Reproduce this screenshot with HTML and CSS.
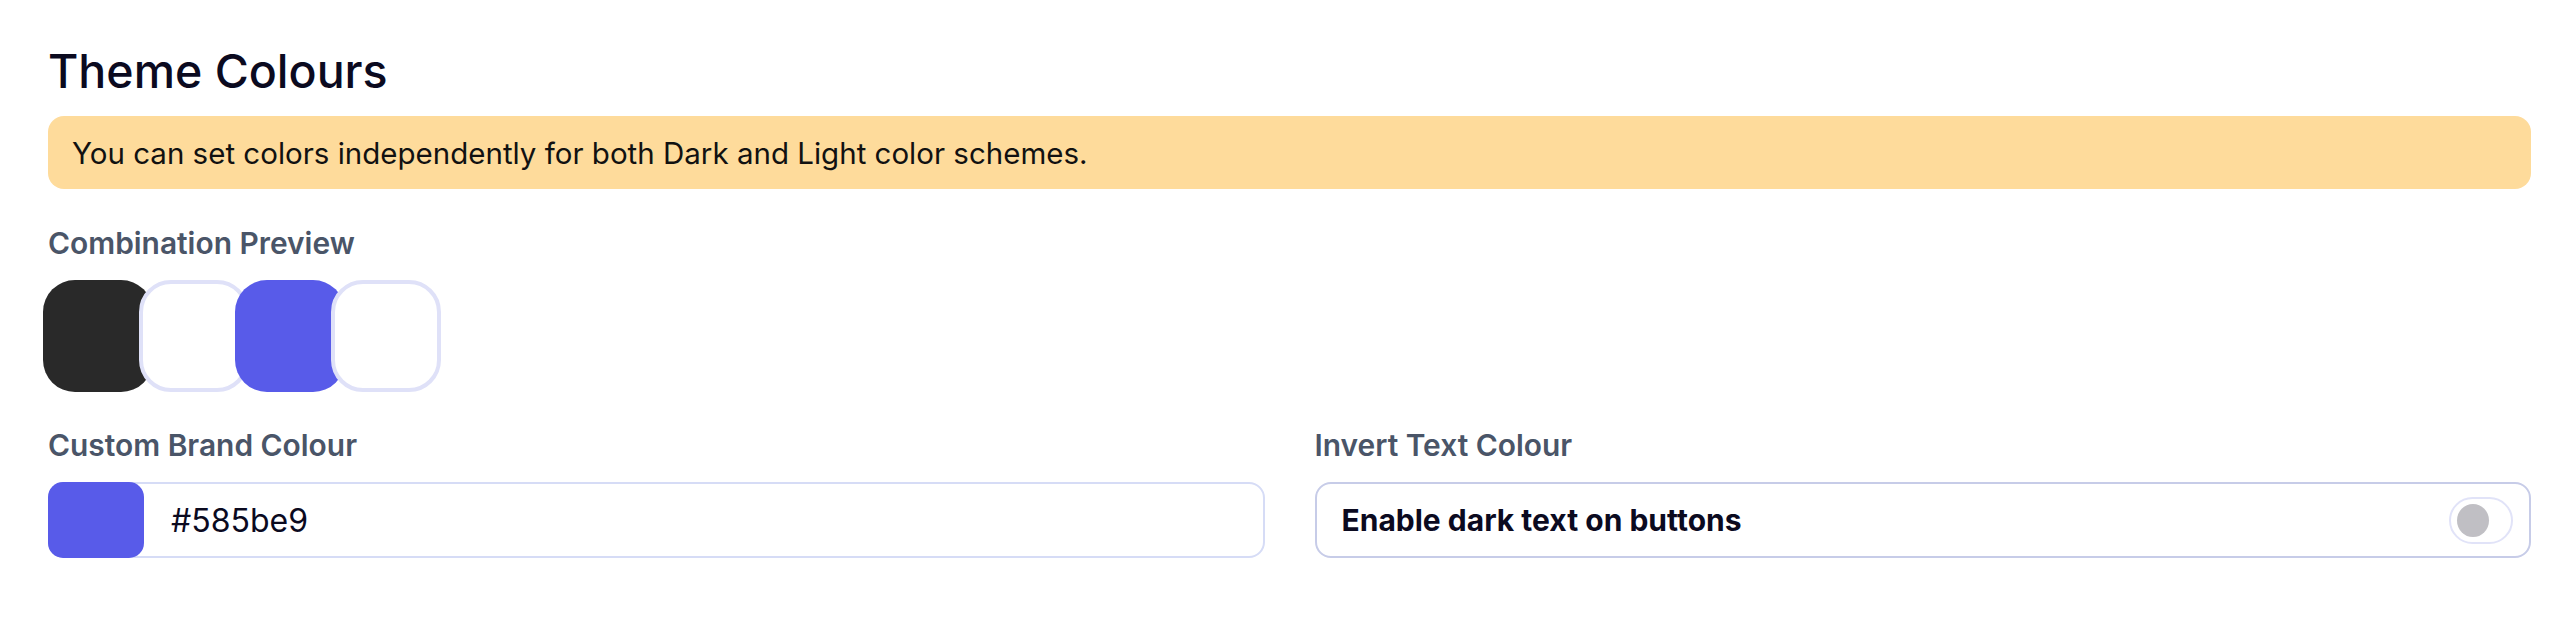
FILE: index.html
```html
<!DOCTYPE html>
<html lang="en">
<head>
<meta charset="utf-8">
<title>Theme Colours</title>
<link rel="stylesheet" href="styles.css">
</head>
<body>
<div class="page">
  <h1 class="title">Theme Colours</h1>
  <div class="notice">You can set colors independently for both Dark and Light color schemes.</div>
  <div class="field preview">
    <div class="label">Combination Preview</div>
    <div class="swatches">
      <span class="swatch swatch-dark"></span>
      <span class="swatch swatch-light"></span>
      <span class="swatch swatch-brand"></span>
      <span class="swatch swatch-light"></span>
    </div>
  </div>
  <div class="grid">
    <div class="field">
      <div class="label">Custom Brand Colour</div>
      <div class="color-input">
        <span class="chip"></span>
        <span class="hex">#585be9</span>
      </div>
    </div>
    <div class="field">
      <div class="label">Invert Text Colour</div>
      <div class="toggle-box">
        <span class="toggle-text">Enable dark text on buttons</span>
        <span class="toggle"><span class="knob"></span></span>
      </div>
    </div>
  </div>
</div>
</body>
</html>
```
FILE: styles.css
```css
html, body {
  margin: 0;
  padding: 0;
  background: #ffffff;
}
body {
  font-family: "Inter", "DejaVu Sans", sans-serif;
  color: #0b0a1f;
}
.page {
  padding: 43px 41px 0 48px;
}
.title {
  margin: 0;
  font-size: 46.5px;
  line-height: 56px;
  font-weight: 500;
  color: #0b0a1f;
}
.notice {
  margin-top: 17px;
  height: 73px;
  box-sizing: border-box;
  padding: 0 24px;
  display: flex;
  align-items: center;
  background: #fedb9b;
  border-radius: 16px;
  font-size: 29.5px;
  color: #111111;
}
.field {
  display: flex;
  flex-direction: column;
  gap: 20px;
}
.preview {
  margin-top: 37px;
}
.label {
  font-size: 29.9px;
  line-height: 34px;
  font-weight: 600;
  color: #4a5568;
}
.swatches {
  display: flex;
  margin-left: -5px;
}
.swatch {
  width: 110px;
  height: 112px;
  box-sizing: border-box;
  border-radius: 32px;
  margin-right: -14px;
}
.swatch-dark { background: #292929; }
.swatch-brand { background: #585be9; }
.swatch-light {
  background: #ffffff;
  border: 4px solid #dfe1f8;
}
.grid {
  margin-top: 36px;
  display: grid;
  grid-template-columns: 1fr 1fr;
  column-gap: 50px;
}
.color-input {
  height: 76px;
  box-sizing: border-box;
  display: flex;
  align-items: center;
  border: 2px solid #d6dcf6;
  border-radius: 16px;
}
.chip {
  align-self: stretch;
  width: 96px;
  margin: -2px 0 -2px -2px;
  background: #585be9;
  border-radius: 15px;
}
.hex {
  margin-left: 27px;
  font-size: 32px;
  color: #0b0a1f;
}
.toggle-box {
  height: 76px;
  box-sizing: border-box;
  display: flex;
  align-items: center;
  justify-content: space-between;
  padding: 0 16px 0 25px;
  border: 2px solid #c7cce8;
  border-radius: 16px;
}
.toggle-text {
  font-size: 30px;
  font-weight: 700;
  color: #0b0a1f;
}
.toggle {
  width: 64px;
  height: 47px;
  box-sizing: border-box;
  border: 2px solid #e1e3f8;
  border-radius: 24px;
  display: flex;
  align-items: center;
  padding-left: 6px;
}
.knob {
  width: 32px;
  height: 33px;
  border-radius: 50%;
  background: #c0bfc4;
}
```
